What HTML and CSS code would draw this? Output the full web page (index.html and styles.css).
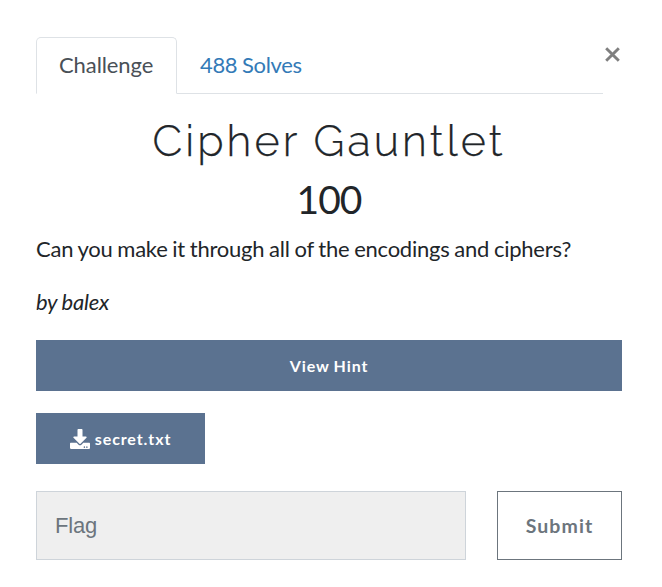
FILE: index.html
```html
<!DOCTYPE html>
<html lang="en">
<head>
<meta charset="utf-8">
<title>Cipher Gauntlet</title>
<link rel="stylesheet" href="styles.css">
</head>
<body>
<main class="modal">
  <header class="top">
    <nav class="tabs">
      <a class="tab active">Challenge</a>
      <a class="tab link">488 Solves</a>
    </nav>
    <button class="close" aria-label="Close"><svg width="15" height="15" viewBox="0 0 15 15"><path d="M1.2 1.2 13.8 13.8M13.8 1.2 1.2 13.8"/></svg></button>
  </header>
  <h2 class="title"><span>Cipher Gauntlet</span></h2>
  <h3 class="points"><span>100</span></h3>
  <p class="desc"><span>Can you make it through all of the encodings and ciphers?</span></p>
  <p class="author"><em>by balex</em></p>
  <button class="btn hint"><span>View Hint</span></button>
  <a class="btn file"><svg width="20" height="20" viewBox="0 0 512 512"><path d="M216 0h80c13.300 0 24 10.700 24 24v168h87.700c17.800 0 26.700 21.500 14.100 34.100L269.700 378.300c-7.500 7.500-19.800 7.500-27.300 0L90.100 226.100c-12.600-12.600-3.700-34.100 14.100-34.100H192V24c0-13.300 10.700-24 24-24zm296 376v112c0 13.300-10.700 24-24 24H24c-13.300 0-24-10.700-24-24V376c0-13.300 10.700-24 24-24h146.700l49 49c20.100 20.100 52.500 20.100 72.600 0l49-49H488c13.300 0 24 10.700 24 24zm-124 88c0-11-9-20-20-20s-20 9-20 20 9 20 20 20 20-9 20-20zm64 0c0-11-9-20-20-20s-20 9-20 20 9 20 20 20 20-9 20-20z"/></svg><span>secret.txt</span></a>
  <div class="answer">
    <input class="flag" placeholder="Flag">
    <button class="submit"><span>Submit</span></button>
  </div>
</main>
</body>
</html>
```

FILE: styles.css
```css
* { box-sizing: border-box; }
body { margin: 0; background: #fff; color: #212529; font-family: Lato, sans-serif; font-size: 22px; line-height: 33px; letter-spacing: -0.09px; }
button { font-family: inherit; cursor: pointer; }
.modal { width: 662px; height: 587px; padding: 37px 40px 0 36px; overflow: hidden; }
.top { display: flex; align-items: flex-start; }
.tabs { display: flex; width: 567px; height: 57px; border-bottom: 1px solid #dee2e6; }
.tab { height: 57px; padding: 10px 22px; border: 1px solid transparent; white-space: nowrap; }
.active { width: 141px; color: #495057; background: #fff; border-color: #dee2e6 #dee2e6 #fff; border-radius: 5px 5px 0 0; }
.link { color: #337ab7; letter-spacing: -0.35px; word-spacing: -0.5px; }
.close { margin: 10px 0 0 2px; padding: 0; border: 0; background: none; line-height: 0; }
.close svg { stroke: #7f7f7f; stroke-width: 2.9; }
.title { margin: 23px 0 0; height: 48px; line-height: 48px; text-align: center; font-family: Raleway, Lato, sans-serif; font-weight: 300; font-size: 43px; letter-spacing: 3.1px; -webkit-text-stroke: 0.25px currentColor; }
.points { margin: 11px 0 0; height: 46px; line-height: 46px; text-align: center; font-weight: 400; font-size: 39px; letter-spacing: -1px; }
.desc { margin: 10px 0 20px; letter-spacing: -0.24px; word-spacing: -0.6px; }
.author { margin: 0; padding-bottom: 22px; letter-spacing: -0.24px; word-spacing: -0.3px; }
.btn { display: flex; align-items: center; justify-content: center; height: 51px; border: 0; background: #5b7290; color: #fff; font-weight: 700; font-size: 16px; letter-spacing: 1px; }
.hint { width: 586px; letter-spacing: 0.88px; word-spacing: -0.5px; }
.file { width: 169px; margin-top: 22px; gap: 5px; letter-spacing: 0.9px; }
.file svg { fill: #fff; }
.answer { display: flex; gap: 31px; margin-top: 27px; }
.flag { width: 430px; height: 69px; padding: 0 18px; border: 1px solid #ced4da; border-radius: 0; background: #efefef; font: 22px "Liberation Sans", sans-serif; letter-spacing: -0.2px; }
.flag::placeholder { color: #6c757d; opacity: 1; }
.submit { width: 125px; height: 69px; padding: 0; border: 1px solid #6c757d; background: #fff; color: #6c757d; font-weight: 700; font-size: 19.500px; letter-spacing: 1.1px; }
```
